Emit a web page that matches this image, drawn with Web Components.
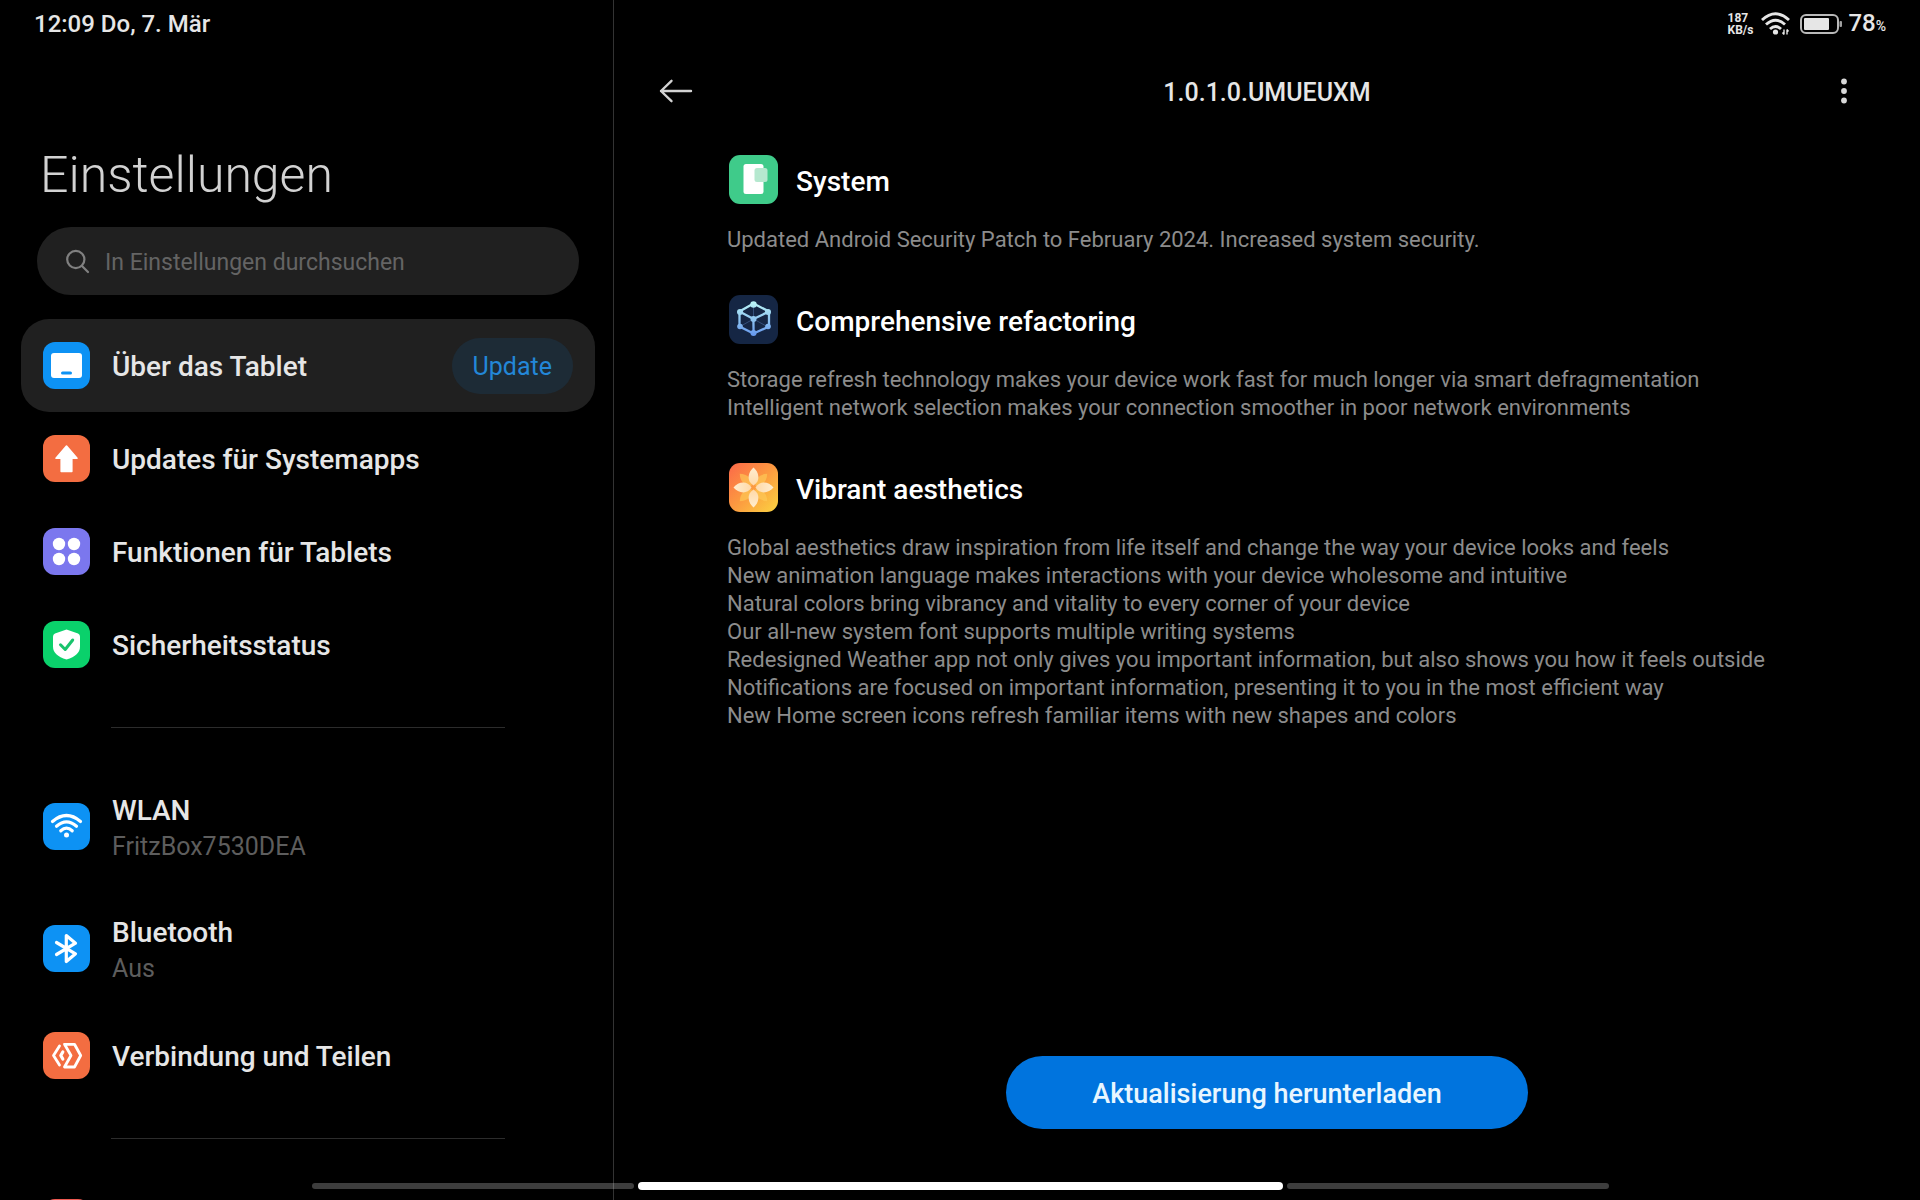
<!DOCTYPE html>
<html lang="de">
<head>
<meta charset="utf-8">
<meta name="viewport" content="width=device-width, initial-scale=1">
<title>Einstellungen</title>
<style>
  html, body { margin: 0; height: 100%; background: #000; overflow: hidden; }
  body { font-family: Roboto, "Noto Sans", sans-serif; color: #e6e6e6; }
</style>
</head>
<body>
<settings-app></settings-app>

<script>
const BASE = `:host{box-sizing:border-box}
  a,b,button,div,h1,h2,h3,header,hr,input,label,main,nav,p,small,span{box-sizing:border-box;margin:0;padding:0}
  button,input{font:inherit;color:inherit;border:0;background:none;outline:none}
  button{cursor:pointer}svg{display:block}`;

function define(name, css, html) {
  const tpl = document.createElement('template');
  tpl.innerHTML = `<style>${BASE}${css}</style>${html}`;
  customElements.define(name, class extends HTMLElement {
    constructor() {
      super();
      this.attachShadow({ mode: 'open' }).append(tpl.content.cloneNode(true));
    }
  });
}

const TILES = {
  tablet: ['#0d92f4', `<rect x="8" y="11" width="31" height="25" rx="3" fill="#fff"/><rect x="18" y="29.500" width="11" height="3" rx="1.500" fill="#0d92f4"/>`],
  update: ['#f36d41', `<path d="M23.500 11 34 23.200H28.800V36.500H18.200V23.200H13z" fill="#fff" stroke="#fff" stroke-width="1.600" stroke-linejoin="round"/>`],
  grid: ['#7b77ee', `<g fill="#fff"><circle cx="16" cy="16" r="6.200"/><circle cx="31" cy="16" r="6.200"/><circle cx="16" cy="31" r="6.200"/><circle cx="31" cy="31" r="6.200"/></g>`],
  shield: ['#0ad16b', `<path d="M23.500 8.500 35 12.600Q37 13.400 37 15.500V25.500Q37 34.500 23.500 38.500 10 34.500 10 25.500V15.500Q10 13.400 12 12.600z" fill="#fff"/><path d="M17.500 23.800 22.200 28.500 29.700 19" fill="none" stroke="#18c46c" stroke-width="3" stroke-linecap="round" stroke-linejoin="round"/>`],
  wifi: ['#0d92f4', `<g fill="none" stroke="#fff" stroke-width="3.200" stroke-linecap="round"><path d="M9.500 18.500Q23.500 6.500 37.500 18.500"/><path d="M13.500 23.200Q23.500 14.400 33.500 23.200"/><path d="M17.800 27.800Q23.500 22.600 29.200 27.800"/></g><circle cx="23.500" cy="32" r="2.500" fill="#fff"/>`],
  bluetooth: ['#0d92f4', `<path d="M13.500 17.500 32.500 28.800 23.300 36.500V10.500L32.500 18.200 13.500 29.500" fill="none" stroke="#fff" stroke-width="3.200" stroke-linecap="round" stroke-linejoin="round"/>`],
  share: ['#f36d41', `<g fill="none" stroke="#fff" stroke-width="2.800" stroke-linecap="round" stroke-linejoin="round"><path d="M21.500 12.300H31.500L37.700 23.500 31.500 35H21.500L28 23.500z"/><path d="M16.500 14 10.500 23.500 16.500 33"/><path d="M19.800 20 17.800 23.500 19.800 27" stroke-width="3.200"/></g>`],
  display: ['#ee5a52', '']
};

customElements.define('app-tile', class extends HTMLElement {
  connectedCallback() {
    const [color, art] = TILES[this.getAttribute('icon')];
    if (!this.shadowRoot) this.attachShadow({ mode: 'open' });
    this.shadowRoot.innerHTML = `<style>${BASE}
      :host{display:block;flex:none;width:47px;height:47px;border-radius:12px;background:${color}}
    </style><svg viewBox="0 0 47 47" width="47" height="47" aria-hidden="true">${art}</svg>`;
  }
});

define('status-clock', `
  :host{display:flex;align-items:center;height:48px;padding:0 34px;font-size:24px;font-weight:500;line-height:28px}
`, `<time>12:09 Do, 7. Mär</time>`);

define('status-icons', `
  :host{display:flex;align-items:center;justify-content:flex-end;height:48px;padding-right:34px;gap:8px;font-weight:500}
  .rate{font-size:12px;line-height:12px;font-weight:700}
  .rate span{display:block}
  .level{display:flex;align-items:baseline;font-size:24px;line-height:28px}
  small{font-size:14px}
  .power{display:flex;align-items:center;gap:5px;padding-left:2px}
`, `
  <div class="rate"><span>187</span><span>KB/s</span></div>
  <svg width="29" height="24" viewBox="0 0 29 24" fill="none" stroke="#e6e6e6" stroke-width="2.900" aria-hidden="true">
    <path d="M1 8Q14.500-4.500 28 8"/><path d="M5 12.500Q14.500 3.800 24 12.500"/><path d="M9 17Q14.500 12 20 17"/>
    <circle cx="14.500" cy="20" r="2.600" fill="#e6e6e6" stroke="none"/>
    <path d="M23 17.500V22.500M21.500 20.500 23 22.500M26 22.500V17.500M27.500 19.500 26 17.500" stroke-width="1.400"/>
  </svg>
  <div class="power">
    <svg width="43" height="20" viewBox="0 0 43 20" aria-hidden="true">
      <rect x="1" y="1" width="37" height="18" rx="5" fill="none" stroke="#b9b9b9" stroke-width="2"/>
      <rect x="4" y="4" width="25" height="12" rx="1" fill="#e6e6e6"/><rect x="39.500" y="7" width="2.500" height="6" rx="1" fill="#a0a0a0"/>
    </svg>
    <div class="level"><span>78</span><small>%</small></div>
  </div>`);

define('search-field', `
  :host{display:block;margin:0 34px 0 37px}
  label{display:flex;align-items:center;gap:15px;height:68px;padding:0 28px;border-radius:34px;background:#202020}
  svg{flex:none}
  input{flex:1;min-width:0;padding-top:4px;font-size:23px;line-height:28px}
  input::placeholder{color:#646464;opacity:1}
`, `
  <label aria-label="In Einstellungen durchsuchen">
    <svg width="25" height="25" viewBox="0 0 25 25" fill="none" stroke="#808080" stroke-width="2.200" stroke-linecap="round" aria-hidden="true"><circle cx="10.800" cy="10.500" r="8.600"/><path d="M17 17 23 23"/></svg>
    <input type="search" placeholder="In Einstellungen durchsuchen">
  </label>`);

customElements.define('setting-row', class extends HTMLElement {
  connectedCallback() {
    if (this.shadowRoot) return;
    const hasNote = this.hasAttribute('note');
    this.attachShadow({ mode: 'open' }).innerHTML = `<style>${BASE}
      :host{display:block;flex:none}
      a{display:flex;align-items:center;gap:22px;height:${hasNote ? 122 : 93}px;padding:0 22px;border-radius:28px;color:inherit;text-decoration:none}
      :host([selected]) a{background:#202020}
      .text{flex:1;padding-top:${hasNote ? 6 : 2}px}
      b{display:block;font-size:28px;line-height:36px;font-weight:500}
      small{display:block;font-size:25px;line-height:36px;color:#5d5d5d}
    </style>
    <a href="#"${this.hasAttribute('selected') ? ' aria-current="page"' : ''}>
      <app-tile icon="${this.getAttribute('icon')}"></app-tile>
      <span class="text"><b><slot></slot></b>${hasNote ? `<small>${this.getAttribute('note')}</small>` : ''}</span>
      <slot name="badge"></slot>
    </a>`;
  }
});

define('update-badge', `
  :host{display:flex;align-items:center;height:56px;padding:2px 21px 0;border-radius:28px;background:#1d2b36;color:#2387d8;font-size:25px;line-height:28px}
`, `<slot></slot>`);

define('settings-sidebar', `
  :host{display:flex;flex-direction:column;overflow:hidden;border-right:1px solid #333}
  h1{flex:none;margin:97px 40px 22px;font-size:50px;line-height:60px;font-weight:300;color:#d2d2d2}
  nav{display:flex;flex-direction:column;margin:24px 18px 0 21px}
  hr{flex:none;border:0;height:1px;margin:36px 90px 37px;background:#2c2c2c}
  status-clock,search-field{flex:none}
`, `
  <status-clock></status-clock>
  <h1>Einstellungen</h1>
  <search-field></search-field>
  <nav aria-label="Einstellungen">
    <setting-row icon="tablet" selected>Über das Tablet<update-badge slot="badge">Update</update-badge></setting-row>
    <setting-row icon="update">Updates für Systemapps</setting-row>
    <setting-row icon="grid">Funktionen für Tablets</setting-row>
    <setting-row icon="shield">Sicherheitsstatus</setting-row>
    <hr>
    <setting-row icon="wifi" note="FritzBox7530DEA">WLAN</setting-row>
    <setting-row icon="bluetooth" note="Aus">Bluetooth</setting-row>
    <setting-row icon="share">Verbindung und Teilen</setting-row>
    <hr>
    <setting-row icon="display"></setting-row>
  </nav>`);

define('detail-header', `
  :host{display:grid;grid-template-columns:62px 1fr 62px;align-items:center;height:86px;padding:0 45px}
  button{display:flex;align-items:center;justify-content:center;height:40px}
  .back{justify-content:flex-start}
  h2{padding-top:4px;text-align:center;font-size:25px;line-height:30px;font-weight:500}
`, `
  <button class="back" aria-label="Zurück"><svg width="34" height="24" viewBox="0 0 34 24" fill="none" stroke="#d2d2d2" stroke-width="2.400" stroke-linecap="round" stroke-linejoin="round"><path d="M32 12H2M12.500 1.800 2 12 12.500 22.200"/></svg></button>
  <h2><slot></slot></h2>
  <button aria-label="Mehr"><svg width="6" height="26" viewBox="0 0 6 26" fill="#d8d8d8"><circle cx="3" cy="3.500" r="2.900"/><circle cx="3" cy="13" r="2.900"/><circle cx="3" cy="22.500" r="2.900"/></svg></button>`);

define('change-section', `
  :host{display:block;margin-bottom:41px}
  header{display:flex;align-items:center;gap:18px;margin:0 0 22px 2px}
  ::slotted(svg){display:block;flex:none;width:49px;height:49px}
  h3{padding-top:5px;font-size:28px;line-height:36px;font-weight:500;color:#fff}
  div{font-size:22px;line-height:28px;color:#8c8c8c}
`, `<header><slot name="icon"></slot><h3><slot name="title"></slot></h3></header><div><slot></slot></div>`);

define('download-button', `
  :host{display:flex;justify-content:center}
  button{width:522px;max-width:90%;height:73px;padding-top:2px;border-radius:37px;background:#0074de;color:#e8f6ff;font-size:27px;line-height:32px;font-weight:500}
`, `<button type="button"><slot></slot></button>`);

define('release-detail', `
  :host{display:flex;flex-direction:column;min-width:0}
  main{flex:1;padding:21px 113px 0}
  download-button{margin-bottom:71px}
`, `
  <status-icons></status-icons>
  <detail-header>1.0.1.0.UMUEUXM</detail-header>
  <main>
    <change-section>
      <svg slot="icon" viewBox="0 0 49 49" aria-hidden="true"><rect width="49" height="49" rx="11" fill="#3fcb8a"/><rect x="14.500" y="9" width="20" height="30" rx="2.500" fill="#fff"/><rect x="25.500" y="13" width="13" height="14" rx="2.500" fill="#b5e8cf"/></svg>
      <span slot="title">System</span>
      <p>Updated Android Security Patch to February 2024. Increased system security.</p>
    </change-section>
    <change-section>
      <svg slot="icon" viewBox="0 0 49 49" aria-hidden="true">
        <defs><linearGradient id="cube" gradientUnits="userSpaceOnUse" x1="0" y1="8" x2="0" y2="40"><stop offset="0" stop-color="#b9f3f6"/><stop offset=".5" stop-color="#8fc6f0"/><stop offset="1" stop-color="#6799ee"/></linearGradient></defs>
        <rect width="49" height="49" rx="11" fill="#152644"/>
        <path d="M24.500 9V24M11 31.500 24.500 24 38 31.500" stroke="#35507a" stroke-width="1" fill="none"/>
        <g stroke="url(#cube)" stroke-width="2.300" fill="none"><path d="M24.500 8.500 40 16.500V31.500L24.500 38.500 10.500 31.500V16.500z"/><path d="M10.500 16.500 24.500 24 40 16.500M24.400 24 24.600 38.500"/></g>
        <g fill="url(#cube)"><circle cx="24.500" cy="9.500" r="3.200"/><circle cx="11" cy="17" r="3"/><circle cx="39" cy="17" r="3"/><circle cx="24.500" cy="24" r="3"/><circle cx="11" cy="31.500" r="2.800"/><circle cx="39" cy="31.500" r="2.800"/><circle cx="24.500" cy="38" r="3"/></g>
      </svg>
      <span slot="title">Comprehensive refactoring</span>
      <p>Storage refresh technology makes your device work fast for much longer via smart defragmentation</p>
      <p>Intelligent network selection makes your connection smoother in poor network environments</p>
    </change-section>
    <change-section>
      <svg slot="icon" viewBox="0 0 49 49" aria-hidden="true">
        <defs><linearGradient id="sun" x1="0" y1="0" x2="1" y2="1"><stop offset="0" stop-color="#fb6849"/><stop offset=".5" stop-color="#fc9a40"/><stop offset="1" stop-color="#fbd441"/></linearGradient>
        <linearGradient id="petal" x1="0" y1="0" x2="0" y2="1"><stop offset="0" stop-color="#ffedcf"/><stop offset="1" stop-color="#ffd9a8"/></linearGradient></defs>
        <rect width="49" height="49" rx="11" fill="url(#sun)"/>
        <g fill="#ffcb57" opacity=".65"><path d="M24.500 22Q16.500 14 24.500 5 32.500 14 24.500 22z" transform="rotate(45 24.500 24.500)"/><path d="M24.500 22Q16.500 14 24.500 5 32.500 14 24.500 22z" transform="rotate(135 24.500 24.500)"/><path d="M24.500 22Q16.500 14 24.500 5 32.500 14 24.500 22z" transform="rotate(225 24.500 24.500)"/><path d="M24.500 22Q16.500 14 24.500 5 32.500 14 24.500 22z" transform="rotate(315 24.500 24.500)"/></g>
        <g fill="url(#petal)"><path d="M24.500 22.500C17 18 19 9 24.500 4.500 30 9 32 18 24.500 22.500z"/><path d="M24.500 22.500C17 18 19 9 24.500 4.500 30 9 32 18 24.500 22.500z" transform="rotate(90 24.500 24.500)"/><path d="M24.500 22.500C17 18 19 9 24.500 4.500 30 9 32 18 24.500 22.500z" transform="rotate(180 24.500 24.500)"/><path d="M24.500 22.500C17 18 19 9 24.500 4.500 30 9 32 18 24.500 22.500z" transform="rotate(270 24.500 24.500)"/></g>
      </svg>
      <span slot="title">Vibrant aesthetics</span>
      <p>Global aesthetics draw inspiration from life itself and change the way your device looks and feels</p>
      <p>New animation language makes interactions with your device wholesome and intuitive</p>
      <p>Natural colors bring vibrancy and vitality to every corner of your device</p>
      <p>Our all-new system font supports multiple writing systems</p>
      <p>Redesigned Weather app not only gives you important information, but also shows you how it feels outside</p>
      <p>Notifications are focused on important information, presenting it to you in the most efficient way</p>
      <p>New Home screen icons refresh familiar items with new shapes and colors</p>
    </change-section>
  </main>
  <download-button>Aktualisierung herunterladen</download-button>`);

define('gesture-bar', `
  :host{position:absolute;left:0;right:0;bottom:10px;display:flex;align-items:center;justify-content:center;gap:4px;pointer-events:none}
  i{display:block;width:322px;height:6px;border-radius:3px;background:rgba(255,255,255,.24)}
  .active{width:645px;height:8px;border-radius:4px;background:#fff}
`, `<i></i><i class="active"></i><i></i>`);

define('settings-app', `
  :host{position:relative;display:grid;grid-template-columns:614px minmax(0,1fr);height:100vh;overflow:hidden}
  settings-sidebar,release-detail{min-height:0}
`, `<settings-sidebar></settings-sidebar><release-detail></release-detail><gesture-bar></gesture-bar>`);
</script>
</body>
</html>
